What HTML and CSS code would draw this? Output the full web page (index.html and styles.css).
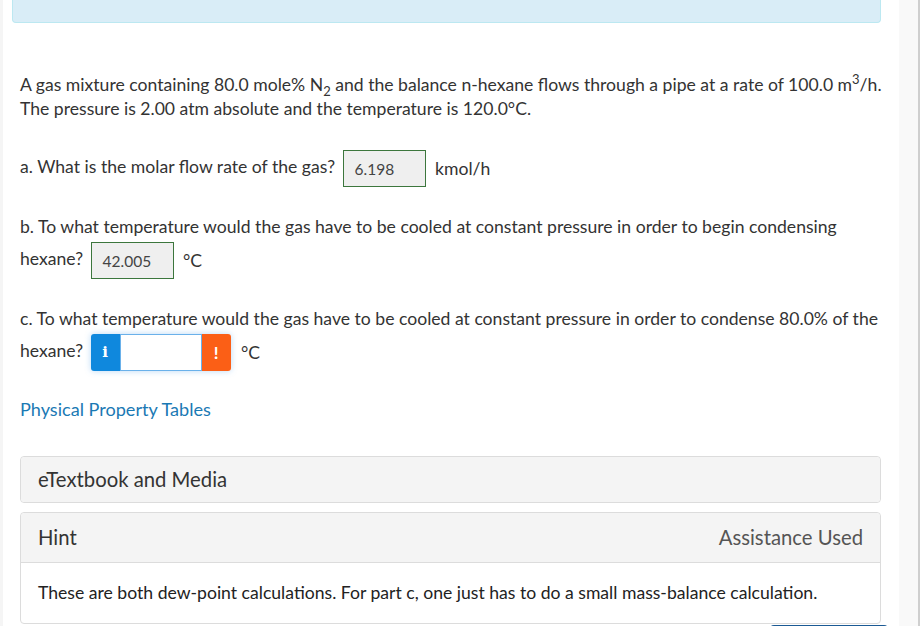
FILE: index.html
```html
<!DOCTYPE html>
<html>
<head>
<meta charset="utf-8">
<link rel="stylesheet" href="styles.css">
</head>
<body>
<div class="page">
  <div class="edge-left"></div>
  <div class="main">
    <div class="notice"></div>
    <div class="content">
      <p class="intro">A gas mixture containing 80.0 mole% N<sub>2</sub> and the balance n-hexane flows through a pipe at a rate of 100.0 m<sup>3</sup>/h. The pressure is 2.00 atm absolute and the temperature is 120.0°C.</p>

      <p class="q qa">a. What is the molar flow rate of the gas? <span class="answer">6.198</span> <span class="unit">kmol/h</span></p>

      <p class="q qb">b. To what temperature would the gas have to be cooled at constant pressure in order to begin condensing hexane? <span class="answer">42.005</span> <span class="unit">°C</span></p>

      <p class="q qc">c. To what temperature would the gas have to be cooled at constant pressure in order to condense 80.0% of the hexane? <span class="widget"><span class="btn-i">i</span><span class="field"></span><span class="btn-x">!</span></span> <span class="unit unit-c">°C</span></p>

      <a class="link" href="#">Physical Property Tables</a>

      <div class="panel panel-media">
        <div class="panel-head">eTextbook and Media</div>
      </div>

      <div class="panel panel-hint">
        <div class="panel-head head-hint"><span>Hint</span><span class="used">Assistance Used</span></div>
        <div class="panel-body">These are both dew-point calculations. For part c, one just has to do a small mass-balance calculation.</div>
      </div>
      <div class="bottom-btn"></div>
    </div>
  </div>
  <div class="scrollbar"></div>
</div>
</body>
</html>
```

FILE: styles.css
```css
html, body {
  margin: 0;
  padding: 0;
  background: #fff;
}
body {
  font-family: Lato, "Open Sans", sans-serif;
  color: #333;
  width: 920px;
  height: 626px;
  overflow: hidden;
}
.page {
  display: flex;
  height: 626px;
}
.edge-left {
  width: 3px;
  background: #f5f5f5;
  flex: none;
}
.main {
  flex: 1;
  background: #fff;
  display: flex;
  flex-direction: column;
  min-height: 0;
}
.scrollbar {
  width: 19px;
  flex: none;
  background: #f9f9f9;
  border-right: 2px solid #cfcfcf;
}
.notice {
  flex: none;
  margin: 0 18px 0 9px;
  height: 22px;
  background: #d9edf7;
  border: 1px solid #bce8f1;
  border-top: none;
  border-radius: 0 0 4px 4px;
}
.content {
  flex: none;
  padding: 0 18px 0 17px;
  display: flex;
  flex-direction: column;
}
p {
  margin: 0;
}
.intro {
  font-size: 17.6px;
  line-height: 24px;
  margin-top: 50px;
  margin-right: -10px;
}
sub, sup {
  font-size: 13px;
  line-height: 0;
}
sub { vertical-align: -5px; }
sup { vertical-align: 7px; }
.q {
  font-size: 17.6px;
  line-height: 31px;
}
.qa { margin-top: 29px; }
.qb { margin-top: 24px; }
.qc { margin-top: 24px; }
.answer {
  display: inline-block;
  box-sizing: border-box;
  width: 83px;
  height: 37px;
  border: 1px solid #3c763d;
  background: #efefef;
  font-size: 15.5px;
  line-height: 37px;
  padding-left: 11px;
  vertical-align: middle;
  margin: 0 5px 0 3px;
  color: #444;
}
.unit {
  vertical-align: middle;
  display: inline-block;
  line-height: 30px;
}
.widget {
  display: inline-flex;
  height: 37px;
  vertical-align: middle;
  margin: 0 6px 0 3px;
  box-shadow: 0 0 6px rgba(60, 150, 230, 0.35);
  border-radius: 3px;
}
.btn-i, .btn-x {
  width: 29px;
  height: 37px;
  color: #fff;
  font-family: "DejaVu Serif", serif;
  font-weight: bold;
  font-size: 15px;
  line-height: 37px;
  text-align: center;
}
.btn-i {
  background: #0f88dd;
  border-radius: 3px 0 0 3px;
}
.btn-x {
  background: #fb5f16;
  border-radius: 0 3px 3px 0;
  font-family: Lato, sans-serif;
  font-size: 17px;
}
.field {
  box-sizing: border-box;
  width: 82px;
  height: 37px;
  background: #fff;
  border: 1px solid #6ab1ea;
}
.link {
  font-size: 18.1px;
  color: #1a79b4;
  text-decoration: none;
  margin-top: 26px;
  line-height: 24px;
  align-self: flex-start;
}
.panel {
  border: 1px solid #dcdcdc;
  border-radius: 4px;
  background: #fff;
}
.panel-media {
  margin-top: 35px;
}
.panel-head {
  background: #f4f4f4;
  font-size: 20.3px;
  line-height: 45px;
  padding: 0 17px;
  color: #333;
  border-radius: 4px 4px 0 0;
}
.panel-media .panel-head {
  border-radius: 4px;
}
.panel-hint {
  margin-top: 9px;
}
.head-hint {
  display: flex;
  justify-content: space-between;
  line-height: 49px;
  border-bottom: 1px solid #dcdcdc;
}
.used {
  color: #555;
}
.panel-body {
  font-size: 17.6px;
  line-height: 60px;
  padding: 0 17px;
  color: #222;
}
.bottom-btn {
  align-self: flex-end;
  width: 118px;
  height: 8px;
  margin-right: -7px;
  margin-top: 1px;
  background: #1b5a94;
  border-radius: 4px 4px 0 0;
}
```
